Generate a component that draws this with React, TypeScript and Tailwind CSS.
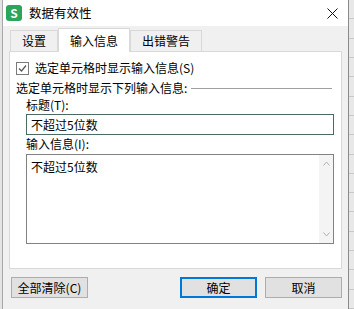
import React from "react";

const font = { fontFamily: '"Noto Sans CJK SC", "Microsoft YaHei", sans-serif' };

const Tab: React.FC<{ label: string; active?: boolean }> = ({ label, active }) => (
  <div
    className={
      active
        ? "h-[24px] px-[11px] flex items-center bg-white border border-b-0 border-[#d9d9d9] -mb-px relative z-10"
        : "h-[21px] px-[11px] flex items-center bg-[#f0f0f0] border border-b-0 border-[#d9d9d9]"
    }
  >
    {label}
  </div>
);

const Btn: React.FC<{ label: React.ReactNode; primary?: boolean }> = ({ label, primary }) => (
  <div
    className={
      "w-[77px] h-[21px] flex items-center justify-center bg-[#e1e1e1] " +
      (primary ? "border-2 border-[#0078d7]" : "border border-[#adadad]")
    }
  >
    {label}
  </div>
);

export default function App() {
  return (
    <div className="w-[354px] h-[309px] flex bg-[#e6e6e6] text-[12px] text-black overflow-hidden" style={font}>
      <div className="w-[3px] bg-[#e4e4e4] border-r border-[#a8a8a8]" />
      <div className="w-[346px] flex flex-col bg-[#f0f0f0] border-r border-[#8a8a8a]">
        <div className="h-[26px] bg-white flex items-center pl-[3px] pr-[10px]">
          <div className="w-[16px] h-[16px] rounded-[3px] bg-[#2aa55c] flex items-center justify-center text-white text-[12px] font-bold leading-none">
            S
          </div>
          <span className="ml-[7px] text-[12.5px]">数据有效性</span>
          <svg className="ml-auto" width="11" height="11" viewBox="0 0 11 11">
            <path d="M0.5 0.5L10.5 10.5M10.5 0.5L0.5 10.5" stroke="#111" strokeWidth="1" />
          </svg>
        </div>
        <div className="flex-1 flex flex-col px-[6px]">
          <div className="flex items-end h-[24px] mt-[1px] pl-[1px]">
            <Tab label="设置" />
            <Tab label="输入信息" active />
            <Tab label="出错警告" />
          </div>
          <div className="h-[218px] bg-white border border-[#d9d9d9] flex flex-col pl-[6px] pr-[7px] pt-[8px]">
            <div className="flex items-center h-[16px]">
              <div className="w-[13px] h-[13px] border border-[#7a7a7a] flex items-center justify-center">
                <svg width="9" height="9" viewBox="0 0 9 9">
                  <path d="M1 4.5L3.5 7L8 1.5" stroke="#555" strokeWidth="1.2" fill="none" />
                </svg>
              </div>
              <span className="ml-[6px]">选定单元格时显示输入信息(S)</span>
            </div>
            <div className="flex items-center h-[16px] mt-[4px]">
              <span>选定单元格时显示下列输入信息:</span>
              <div className="flex-1 h-px bg-[#a0a0a0] ml-[4px] mr-[2px]" />
            </div>
            <div className="pl-[10px] flex flex-col">
              <div className="h-[16px] mt-[1px] flex items-center">标题(T):</div>
              <div className="h-[21px] mt-[1px] border border-[#4a6a66] bg-white flex items-center pl-[4px]">
                不超过5位数
              </div>
              <div className="h-[16px] mt-[1px] flex items-center">输入信息(I):</div>
              <div className="h-[90px] mt-[2px] border border-[#828282] bg-white flex">
                <div className="flex-1 pl-[4px] pt-[3px]">不超过5位数</div>
                <div className="w-[14px] bg-[#f4f4f4] flex flex-col items-center justify-between py-[6px]">
                  <svg width="7" height="5" viewBox="0 0 7 5">
                    <path d="M0.5 4.5L3.5 1L6.5 4.5" stroke="#b0b0b0" fill="none" />
                  </svg>
                  <svg width="7" height="5" viewBox="0 0 7 5">
                    <path d="M0.5 0.5L3.5 4L6.5 0.5" stroke="#b0b0b0" fill="none" />
                  </svg>
                </div>
              </div>
            </div>
          </div>
          <div className="flex items-center mt-[8px] pl-[2px]">
            <Btn label="全部清除(C)" />
            <div className="ml-auto flex gap-[8px]">
              <Btn label="确定" primary />
              <Btn label="取消" />
            </div>
          </div>
        </div>
      </div>
      <div className="flex-1 flex flex-col bg-[#e8e8e8]">
        {Array.from({ length: 16 }).map((_, i) => (
          <div key={i} className="h-[20px] border-b border-[#c8c8c8]" />
        ))}
      </div>
    </div>
  );
}
